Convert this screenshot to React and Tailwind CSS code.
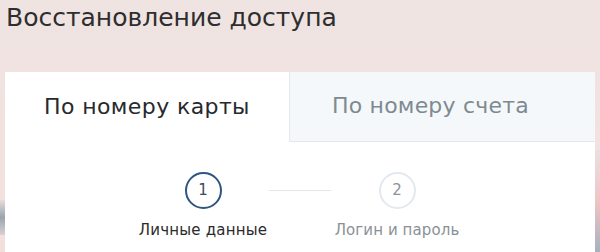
export default function App() {
  const font = { fontFamily: '"DejaVu Sans", "Open Sans", sans-serif' };
  return (
    <div className="w-[600px] h-[252px] overflow-hidden relative bg-gradient-to-b from-[#efe4e2] to-[#f3e0dd]" style={font}>
      <div className="absolute left-0 top-[200px] w-[5px] h-[35px] bg-gradient-to-b from-[#e8dcd9] via-[#9aa4ae] to-[#d9d2d3]" />
      <div className="absolute right-0 top-[150px] w-[5px] h-[102px] bg-gradient-to-b from-[#e9e0e2] via-[#f0c4c4] to-[#a7b0bf]" />
      <div className="pl-[6px] pt-[1px] h-[72px]">
        <h1 className="text-[25px] leading-[34px] text-[#2e2e2e]">Восстановление доступа</h1>
      </div>
      <div className="ml-[5px] w-[590px] bg-white h-[180px]">
        <div className="flex h-[70px]">
          <div className="w-[284px] flex items-center pl-[39px] pb-[2px] text-[22px] tracking-[0.4px] text-[#26292d]">По номеру карты</div>
          <div className="flex-1 flex items-center pl-[42px] pb-[2px] text-[22px] tracking-[0.2px] text-[#7f8a90] bg-[#f4f8fb] border-l border-b border-[#e3e8ec]">По номеру счета</div>
        </div>
        <div className="flex justify-center pt-[30px]">
          <div className="flex items-start">
            <div className="flex flex-col items-center w-[140px]">
              <div className="w-[37px] h-[37px] rounded-full border-2 border-[#2f5683] flex items-center justify-center text-[15px] text-[#3d4b5c]">1</div>
              <div className="mt-[10px] text-[15px] tracking-[0.2px] text-[#2b2b2b] whitespace-nowrap">Личные данные</div>
            </div>
            <div className="w-[62px] h-[1px] bg-[#e3e8ec] mt-[18px] -mx-[4px]" />
            <div className="flex flex-col items-center w-[140px]">
              <div className="w-[37px] h-[37px] rounded-full border-2 border-[#e3e9ee] flex items-center justify-center text-[15px] text-[#8a949b]">2</div>
              <div className="mt-[10px] text-[15px] tracking-[0.1px] text-[#8a9096] whitespace-nowrap">Логин и пароль</div>
            </div>
          </div>
        </div>
      </div>
    </div>
  );
}
